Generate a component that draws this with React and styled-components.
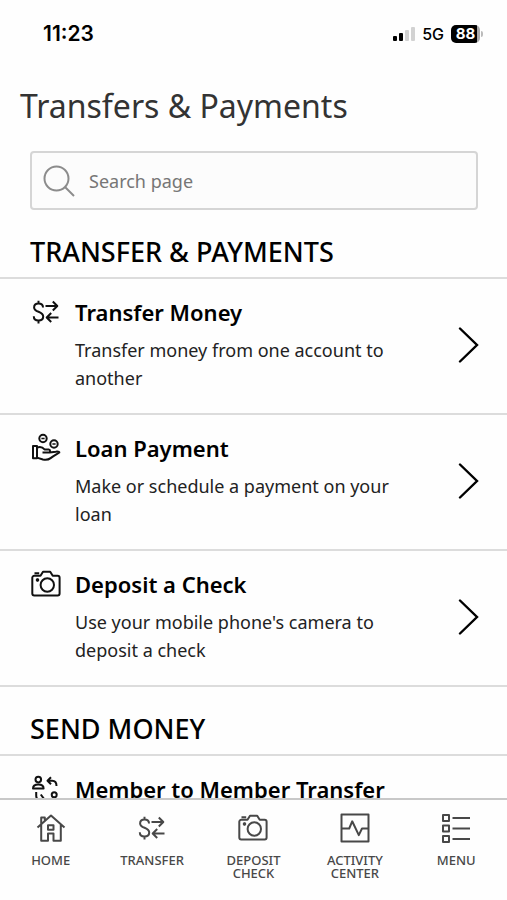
import React from 'react';
import styled, { createGlobalStyle } from 'styled-components';

const GlobalStyle = createGlobalStyle`
  * {
    box-sizing: border-box;
  }
  body {
    margin: 0;
    background: #fefefe;
    color: #111;
    font-family: "Noto Sans", "Open Sans", sans-serif;
  }
  a {
    color: inherit;
    text-decoration: none;
  }
`

const Screen = styled.div`
  display: flex;
  flex-direction: column;
  height: 100vh;
`
const StatusBar = styled.header`
  display: flex;
  align-items: center;
  justify-content: space-between;
  flex: none;
  height: 67px;
  padding: 0 24px 0 43px;
  color: #000;
  font-family: Inter, sans-serif;
`
const Clock = styled.time`
  font-size: 21px;
  font-weight: 600;
  line-height: 24px;
`
const StatusIcons = styled.div`
  display: flex;
  align-items: center;
  gap: 7px;
`
const Signal = styled.div`
  display: flex;
  align-items: flex-end;
  gap: 2px;
  height: 14px;
`
const SignalBar = styled.span`
  width: 4px;
  height: ${({ $height }) => $height}px;
  border-radius: 1px;
  background: ${({ $active }) => ($active ? '#000' : '#d2d2d2')};
`
const Network = styled.span`
  font-size: 16px;
  font-weight: 500;
  line-height: 20px;
`
const Battery = styled.div`
  display: flex;
  align-items: center;
  gap: 1px;
`
const BatteryBody = styled.span`
  width: 29px;
  height: 18px;
  border-radius: 5px;
  background: linear-gradient(to right, #000 90%, #aaa 90%);
  color: #fff;
  font-size: 15px;
  font-weight: 700;
  line-height: 18px;
  text-align: center;
`
const BatteryTip = styled.span`
  width: 2px;
  height: 6px;
  border-radius: 0 2px 2px 0;
  background: #bbb;
`
const Content = styled.main`
  flex: 1;
  min-height: 0;
  overflow-y: auto;
  scrollbar-width: none;
`
const PageTitle = styled.h1`
  margin: 0;
  padding: 15px 20px 21px;
  color: #333;
  font-size: 32px;
  font-weight: 400;
  line-height: 48px;
`
const SearchBox = styled.label`
  display: flex;
  align-items: center;
  gap: 14px;
  height: 59px;
  margin: 0 29px 0 30px;
  padding: 0 11px;
  border: 2px solid #d5d5d5;
  border-radius: 4px;
  background: #fcfcfc;
  color: #8c8c8c;
`
const SearchInput = styled.input`
  flex: 1;
  min-width: 0;
  padding: 0;
  border: 0;
  outline: 0;
  background: transparent;
  color: #333;
  font: 400 18px/28px "Noto Sans", "Open Sans", sans-serif;
  &::placeholder {
    color: #767676;
    opacity: 1;
  }
`
const SectionTitle = styled.h2`
  margin: 0;
  padding: 25px 30px 8px;
  color: #000;
  font-size: 27px;
  font-weight: 500;
  line-height: 34px;
`
const List = styled.ul`
  margin: 0;
  padding: 0;
  list-style: none;
`
const Item = styled.li`
  border-top: 2px solid #dcdcdc;
  &:last-child {
    border-bottom: 2px solid #dcdcdc;
  }
`
const ItemLink = styled.a`
  display: flex;
  align-items: flex-start;
  gap: 14px;
  min-height: 134px;
  padding: 18px 28px 21px 31px;
`
const ItemIcon = styled.span`
  display: flex;
  align-items: center;
  flex: none;
  height: 30px;
`
const ItemText = styled.div`
  flex: 1;
`
const ItemTitle = styled.h3`
  margin: 0;
  color: #000;
  font-size: 22px;
  font-weight: 600;
  line-height: 30px;
`
const ItemDescription = styled.p`
  max-width: 330px;
  margin: 9px 0 0;
  color: #222;
  font-size: 18px;
  line-height: 28px;
`
const ItemArrow = styled.span`
  display: flex;
  align-self: center;
  color: #000;
`
const TabBar = styled.nav`
  display: grid;
  grid-template-columns: repeat(5, 1fr);
  flex: none;
  height: 102px;
  border-top: 2px solid #c8c8c8;
  background: #fefefe;
`
const Tab = styled.a`
  display: flex;
  flex-direction: column;
  align-items: center;
  gap: 11px;
  padding-top: 13px;
  color: #484848;
`
const TabLabel = styled.span`
  max-width: 76px;
  font-size: 13px;
  font-weight: 500;
  line-height: 13px;
  text-align: center;
  text-transform: uppercase;
`

const Icon = ({ size = 30, stroke = 2, children }) => (
  <svg
    width={size}
    height={size}
    viewBox="0 0 30 30"
    fill="none"
    stroke="currentColor"
    strokeWidth={stroke}
    strokeLinejoin="round"
    aria-hidden="true"
  >
    {children}
  </svg>
)

const SearchIcon = () => (
  <svg width="32" height="32" viewBox="0 0 32 32" fill="none" stroke="currentColor" strokeWidth="2" aria-hidden="true">
    <circle cx="13.5" cy="13.5" r="12" />
    <path d="M22 22l9 9" />
  </svg>
)

const ArrowIcon = () => (
  <svg width="22" height="36" viewBox="0 0 22 36" fill="none" stroke="currentColor" strokeWidth="2.4" strokeLinecap="round" aria-hidden="true">
    <path d="M3 1.5L20 18L3 34.5" />
  </svg>
)

const TransferIcon = (props) => (
  <Icon {...props}>
    <path d="M12 10.500C12 8 10.200 6.500 7.500 6.500S3.100 8 3.100 10.400c0 5.200 9.100 3.600 9.100 9.100 0 2.500-2 4-4.700 4s-4.700-1.500-4.700-4.200M7.500 3.800v2.700M7.500 23.500v2.900" />
    <path d="M14.500 9h12M21.800 4.500L26.300 9l-4.500 4.500M27.500 20.500h-12M20.200 16l-4.500 4.500 4.500 4.500" />
  </Icon>
)

const LoanIcon = (props) => (
  <Icon {...props}>
    <circle cx="12" cy="5.500" r="3.700" />
    <circle cx="23" cy="11" r="3.700" />
    <path d="M10.400 5.500h3.200M21.400 11h3.200" strokeWidth="1.500" />
    <path d="M2 13h4v12.200H2zM6 14.600c3-1.200 5.500-.6 7.500 1.800h4.300c1.700 0 1.700 3.200 0 3.200h-6.300M18.500 19.600l6.300-.9c1.600-.3 3.900 0 3.500.8-2.500 1.600-6.100 3.500-8.700 5.600-1.800 1.400-5.400 1.900-7.700 1.400L6 24.600" />
  </Icon>
)

const CameraIcon = (props) => (
  <Icon {...props}>
    <path d="M3.300 6.800h6.200l2.500-4h7.200l2.500 4h4.900a2 2 0 0 1 2 2v15.600a2 2 0 0 1-2 2H3.300a2 2 0 0 1-2-2V8.800a2 2 0 0 1 2-2zM3.500 4.300h4.700" />
    <circle cx="16.300" cy="16" r="6.700" />
    <circle cx="6.500" cy="11" r="1.400" fill="currentColor" stroke="none" />
    <circle cx="6.500" cy="11" r=".8" />
  </Icon>
)

const MemberIcon = (props) => (
  <Icon {...props}>
    <circle cx="7.300" cy="5.600" r="2.800" />
    <path d="M2 14.600c0-3 2-4 5.300-4s5.300 1 5.300 4zM20 3.200l-3.500 3.500 3.500 3.500M16.500 6.700h4.700c3 0 4.300 1.900 4.300 5.300" />
    <circle cx="23.200" cy="20.800" r="2.500" />
    <path d="M18 29.500c0-3 2-4 5.200-4s5.200 1 5.200 4zM5.200 18v3.200c0 3.200 1.500 5.300 4.500 5.300h3.500M9.800 20.500l4 5.500-3.500 3.500" />
  </Icon>
)

const HomeIcon = (props) => (
  <Icon {...props}>
    <path d="M1.500 14.500L15 2.500l13.500 12M5.200 11.500v16.300h6.800v-7.300h5.500v7.300h7.300V11.500M5.200 11V4.500h3.600v3.200M12 12.200h5.500v4.600H12z" />
  </Icon>
)

const ActivityIcon = (props) => (
  <Icon {...props}>
    <path d="M1.500 1.500h27v27h-27zM1.500 15.500h7.700l3-7.200 6.600 13.800 3.200-6.600h6.500" />
  </Icon>
)

const MenuIcon = (props) => (
  <Icon {...props}>
    <path d="M2 2h6v6H2zM2 12.500h6v6H2zM2 23h6v6H2zM11.500 5H29M11.500 15.500H29M11.500 26H29" />
  </Icon>
)

const transfers = [
  { title: 'Transfer Money', text: 'Transfer money from one account to another', icon: TransferIcon },
  { title: 'Loan Payment', text: 'Make or schedule a payment on your loan', icon: LoanIcon },
  { title: 'Deposit a Check', text: "Use your mobile phone's camera to deposit a check", icon: CameraIcon },
]

const sendMoney = [
  { title: 'Member to Member Transfer', icon: MemberIcon },
]

const tabs = [
  { label: 'Home', icon: HomeIcon },
  { label: 'Transfer', icon: TransferIcon },
  { label: 'Deposit Check', icon: CameraIcon },
  { label: 'Activity Center', icon: ActivityIcon },
  { label: 'Menu', icon: MenuIcon },
]

const Section = ({ title, items }) => (
  <section>
    <SectionTitle>{title}</SectionTitle>
    <List>
      {items.map(({ title, text, icon: ItemSvg }) => (
        <Item key={title}>
          <ItemLink href="#">
            <ItemIcon><ItemSvg /></ItemIcon>
            <ItemText>
              <ItemTitle>{title}</ItemTitle>
              {text && <ItemDescription>{text}</ItemDescription>}
            </ItemText>
            <ItemArrow><ArrowIcon /></ItemArrow>
          </ItemLink>
        </Item>
      ))}
    </List>
  </section>
)

const App = () => {
  return (
    <Screen>
      <GlobalStyle />
      <StatusBar>
        <Clock>11:23</Clock>
        <StatusIcons>
          <Signal>
            <SignalBar $height={5} $active />
            <SignalBar $height={8} $active />
            <SignalBar $height={11} />
            <SignalBar $height={14} />
          </Signal>
          <Network>5G</Network>
          <Battery>
            <BatteryBody>88</BatteryBody>
            <BatteryTip />
          </Battery>
        </StatusIcons>
      </StatusBar>
      <Content>
        <PageTitle>Transfers &amp; Payments</PageTitle>
        <SearchBox>
          <SearchIcon />
          <SearchInput type="search" placeholder="Search page" aria-label="Search page" />
        </SearchBox>
        <Section title="TRANSFER & PAYMENTS" items={transfers} />
        <Section title="SEND MONEY" items={sendMoney} />
      </Content>
      <TabBar>
        {tabs.map(({ label, icon: TabSvg }) => (
          <Tab href="#" key={label}>
            <TabSvg size={30} />
            <TabLabel>{label}</TabLabel>
          </Tab>
        ))}
      </TabBar>
    </Screen>
  );
};

export default App;
